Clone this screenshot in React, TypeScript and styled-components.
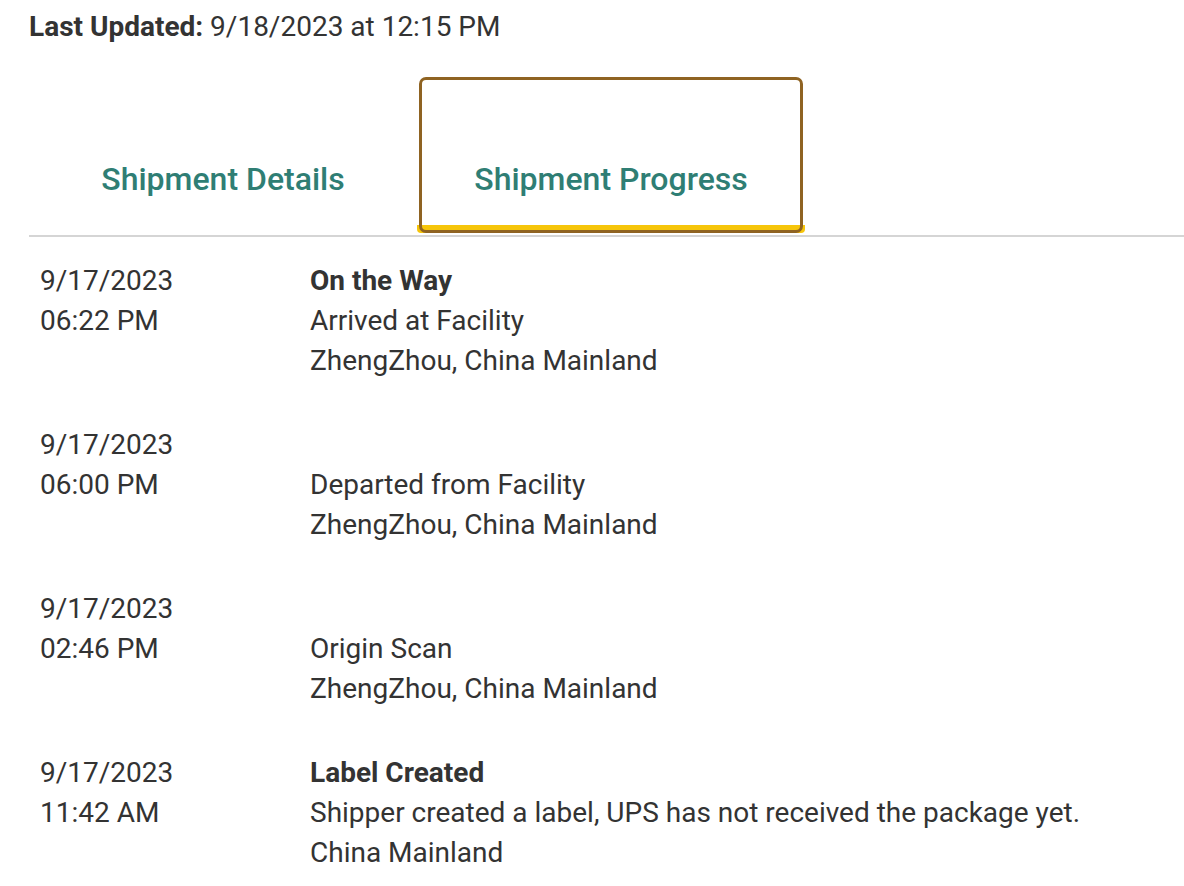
import React from "react";
import styled, { createGlobalStyle, css } from "styled-components";

const Global = createGlobalStyle`
  html, body { margin: 0; padding: 0; background: #fff; }
  body { font-family: Roboto, "Liberation Sans", sans-serif; color: #333; }
`;

const Page = styled.div`
  padding: 7px 0 0 29px;
`;

const Updated = styled.div`
  font-size: 28px;
  line-height: 40px;
  color: #333;
`;

const UpdatedLabel = styled.span`
  font-weight: 700;
`;

const TabBar = styled.div`
  display: flex;
  align-items: flex-end;
  margin-top: 28px;
  border-bottom: 2px solid #d5d5d5;
`;

const Tab = styled.button<{ $active?: boolean }>`
  position: relative;
  width: 388px;
  height: 158px;
  box-sizing: border-box;
  padding: 58px 0 0;
  margin: 0 0 2px;
  background: #fff;
  border: none;
  border-bottom: 8px solid ${(p) => (p.$active ? "#f6c50a" : "transparent")};
  border-radius: 4px;
  font-family: Roboto, "Liberation Sans", sans-serif;
  font-size: 32px;
  font-weight: 500;
  color: #2f7e74;
  cursor: pointer;
  ${(p) =>
    p.$active &&
    css`
      &::after {
        content: "";
        position: absolute;
        left: 2px;
        right: 2px;
        top: 2px;
        bottom: -8px;
        border: 3px solid #8f6322;
        border-radius: 7px;
        pointer-events: none;
      }
    `}
`;

const List = styled.div`
  display: flex;
  flex-direction: column;
  gap: 44px;
  padding: 24px 0 0 11px;
`;

const Row = styled.div`
  display: grid;
  grid-template-columns: 270px 1fr;
  font-size: 28px;
  line-height: 40px;
  color: #333;
`;

const Col = styled.div`
  display: flex;
  flex-direction: column;
`;

const Line = styled.div<{ $bold?: boolean }>`
  font-weight: ${(p) => (p.$bold ? 700 : 400)};
  min-height: 40px;
`;

const events = [
  { date: "9/17/2023", time: "06:22 PM", status: "On the Way", activity: "Arrived at Facility", loc: "ZhengZhou, China Mainland" },
  { date: "9/17/2023", time: "06:00 PM", status: "", activity: "Departed from Facility", loc: "ZhengZhou, China Mainland" },
  { date: "9/17/2023", time: "02:46 PM", status: "", activity: "Origin Scan", loc: "ZhengZhou, China Mainland" },
  { date: "9/17/2023", time: "11:42 AM", status: "Label Created", activity: "Shipper created a label, UPS has not received the package yet.", loc: "China Mainland" },
];

export default function App() {
  return (
    <>
      <Global />
      <Page>
        <Updated>
          <UpdatedLabel>Last Updated:</UpdatedLabel> 9/18/2023 at 12:15 PM
        </Updated>
        <TabBar>
          <Tab>Shipment Details</Tab>
          <Tab $active>Shipment Progress</Tab>
        </TabBar>
        <List>
          {events.map((e, i) => (
            <Row key={i}>
              <Col>
                <Line>{e.date}</Line>
                <Line>{e.time}</Line>
              </Col>
              <Col>
                <Line $bold>{e.status}</Line>
                <Line>{e.activity}</Line>
                <Line>{e.loc}</Line>
              </Col>
            </Row>
          ))}
        </List>
      </Page>
    </>
  );
}
